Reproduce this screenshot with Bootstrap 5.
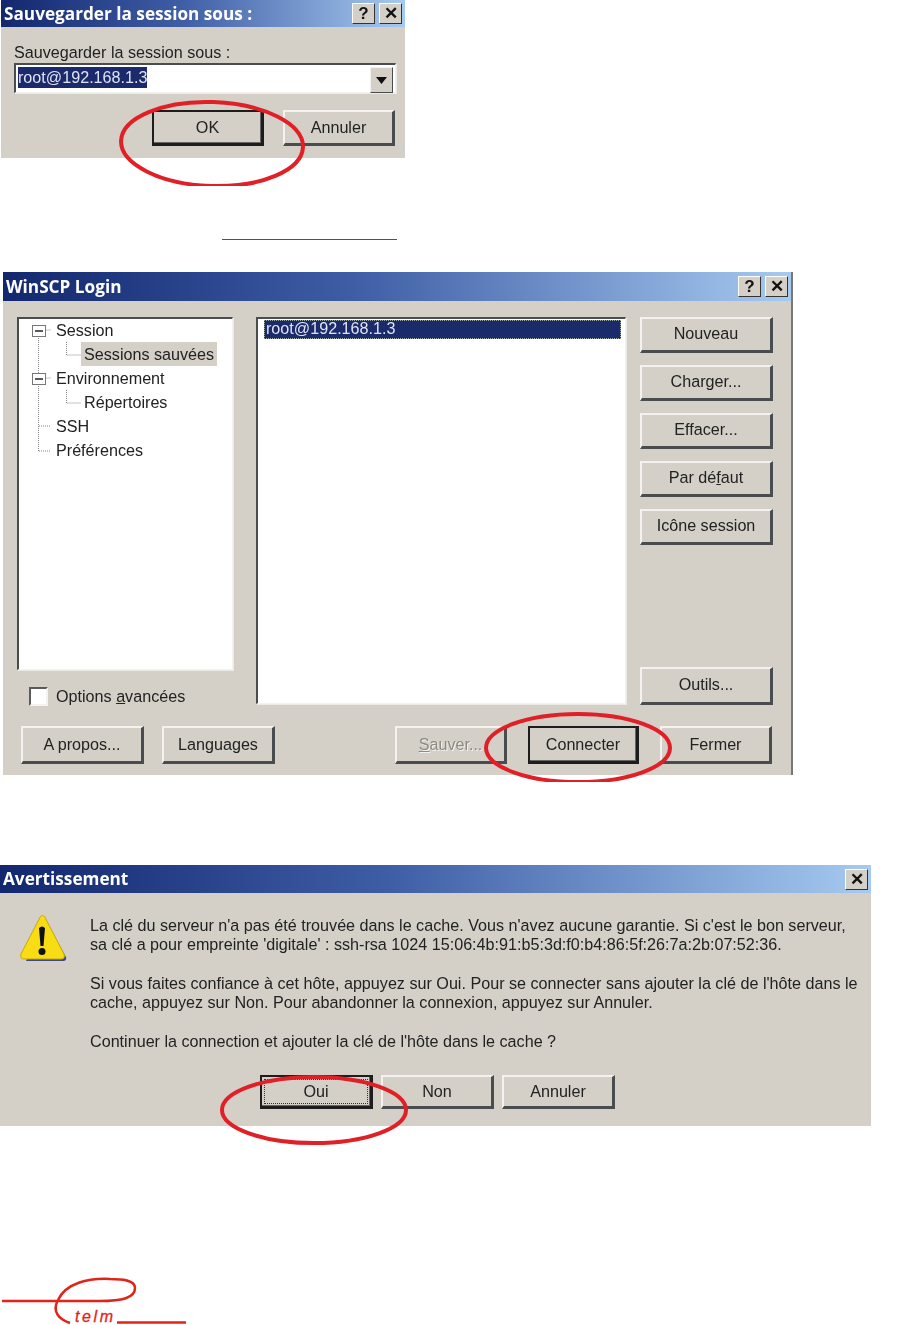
<!DOCTYPE html>
<html lang="fr">
<head>
<meta charset="UTF-8">
<title>WinSCP</title>
<link href="https://cdn.jsdelivr.net/npm/bootstrap@5.3.3/dist/css/bootstrap.min.css" rel="stylesheet">
<style>
body { position: relative; width: 909px; height: 1325px; overflow: hidden; background: #fff; color: #222; font-family: "Liberation Sans", Arial, sans-serif; font-size: 16.15px; line-height: 19px; }
.xp-win { background: #d4d0c8; border: 0; border-radius: 0; color: #222; --bs-card-bg: #d4d0c8; filter: blur(0.4px); }
.win-a { width: 404px; height: 158px; margin-left: 1px; }
.win-b { width: 790px; height: 503px; margin-left: 3px; border-right: 2px solid #777; }
.win-c { width: 871px; height: 261px; }
.link-rule { width: 175px; height: 1px; margin: 81px 0 32px 222px; background: #3a4fa0; }
.win-gap { height: 90px; }
.xp-title { background: linear-gradient(90deg, #12276e 0%, #3f5ea6 45%, #a6caf0 100%); color: #fff; font-family: "Open Sans", sans-serif; font-weight: 700; font-size: 17.2px; line-height: 20px; padding: 0 3px; border: 0; border-radius: 0 !important; }
.win-a .xp-title { height: 27px; }
.win-b .xp-title { height: 29px; }
.win-c .xp-title { height: 28px; }
.cap-btn { width: 23px; height: 21px; background: #d4d0c8; color: #111; border: 1px solid; border-color: #fff #333 #333 #fff; font-family: "Liberation Sans", sans-serif; font-weight: 700; font-size: 17px; line-height: 19px; text-align: center; }
.xp-btn { --bs-btn-padding-x: 0; --bs-btn-padding-y: 0; --bs-btn-border-radius: 0; --bs-btn-font-size: 16.15px; --bs-btn-line-height: 19px; --bs-btn-color: #222; --bs-btn-bg: #d4d0c8; --bs-btn-disabled-opacity: 1; background: #d4d0c8; color: #222; font-family: "Liberation Sans", sans-serif; border-style: solid; border-width: 2px 3px 3px 2px; border-color: #f4f2ee #4a4d50 #4a4d50 #f4f2ee; flex-shrink: 0; }
.xp-btn.is-default { border: 2px solid #1d1d1d; border-bottom-width: 3px; border-right-width: 3px; box-shadow: inset -1px -1px 0 #666; }
.xp-btn.is-off { color: #8c8a84; text-shadow: 1px 1px 0 #f4f2ee; }
.w-112 { width: 112px; }
.w-113 { width: 113px; }
.focus-dots { display: block; margin: 2px; height: calc(100% - 4px); border: 1px dotted #333; line-height: 22px; }
.sunken { background: #fff; border-style: solid; border-width: 2px 1px 1px 2px; border-color: #4a4d50 #f4f2ee #f4f2ee #4a4d50; box-shadow: 1px 1px 0 #eceae5; }
/* window 1 */
.a-body { padding: 16px 9px 0 13px; }
.a-combo { height: 30px; padding: 2px 2px 0 2px; margin-top: 1px; }
.sel-text { background: #1b2a6b; color: #dfe3f2; display: inline-block; height: 21px; line-height: 21px; }
.combo-drop { width: 23px; height: 26px; background: #d4d0c8; border: 1px solid; border-color: #f4f2ee #4a4d50 #4a4d50 #f4f2ee; display: flex; align-items: center; justify-content: center; }
.a-btns { margin-top: 17px; padding-left: 138px; gap: 19px; height: 36px; }
/* window 2 */
.b-body { padding: 16px 0 0 14px; }
.b-left { width: 216px; }
.b-tree { height: 353px; padding: 0; }
.tree-row { height: 24px; line-height: 24px; display: flex; align-items: center; white-space: nowrap; position: relative; top: -1px; }
.tree-ico { width: 37px; flex: none; }
.tree-sub { width: 65px; flex: none; }
.tree-svg { display: block; overflow: visible; }
.tree-hi { background: #d4d0c8; padding: 0 3px; margin-left: -3px; }
.b-list { width: 370px; height: 387px; margin-left: 23px; padding: 1px 4px 1px 6px; }
.list-sel { background: #1b2a6b; color: #dfe3f2; height: 19px; line-height: 15px; padding-left: 1px; border: 1px dotted #9aa; }
.b-side { width: 133px; margin-left: 14px; height: 388px; gap: 12px; }
.b-side .btn { width: 133px; height: 36px; padding-bottom: 2px; }
.b-side .btn-tools { height: 38px; }
.b-check { margin: 16px 0 0 12px; height: 20px; }
.chk-box { width: 19px; height: 19px; background: #fff; border: 2px solid; border-color: #5a5a5a #f4f2ee #f4f2ee #5a5a5a; margin-right: 8px; }
.b-foot { height: 38px; margin: 20px 18px 0 18px; }
.foot-about { width: 123px; }
.foot-lang { width: 113px; margin-left: 18px; }
.foot-save { margin-left: 120px; }
.foot-conn { width: 111px; margin-left: 21px; }
.foot-close { margin-left: 21px; }
/* window 3 */
.c-body { padding: 22px 0 0 20px; }
.c-text { margin: 1px 0 0 23px; width: 780px; white-space: nowrap; }
.c-text p { margin: 0 0 20px 0; }
.c-btns { gap: 8px; margin: 4px 0 0 240px; height: 34px; }
.logo-box { position: relative; height: 60px; margin-top: 139px; }
.logo-word { position: absolute; left: 75px; top: 44px; color: #e2231a; font-family: "Liberation Sans", sans-serif; font-style: italic; font-size: 16px; line-height: 15px; letter-spacing: 2.6px; -webkit-text-stroke: 0.3px #e2231a; }
.marks { position: absolute; left: 0; top: 0; pointer-events: none; }
.u-key { text-decoration: underline; }
</style>
</head>
<body>

<div class="card xp-win win-a">
  <div class="card-header xp-title d-flex align-items-center justify-content-between">
    <span>Sauvegarder la session sous :</span>
    <span class="d-flex gap-1"><span class="cap-btn">?</span><span class="cap-btn">✕</span></span>
  </div>
  <div class="a-body">
    <div>Sauvegarder la session sous :</div>
    <div class="sunken a-combo d-flex justify-content-between">
      <span class="sel-text">root@192.168.1.3</span>
      <span class="combo-drop"><svg width="11" height="7"><path d="M0 0h11L5.500 7z" fill="#111"/></svg></span>
    </div>
    <div class="d-flex a-btns">
      <button class="btn xp-btn is-default w-112">OK</button>
      <button class="btn xp-btn w-112">Annuler</button>
    </div>
  </div>
</div>

<div class="link-rule"></div>

<div class="card xp-win win-b">
  <div class="card-header xp-title d-flex align-items-center justify-content-between">
    <span>WinSCP Login</span>
    <span class="d-flex gap-1"><span class="cap-btn">?</span><span class="cap-btn">✕</span></span>
  </div>
  <div class="b-body d-flex">
    <div class="b-left">
      <div class="sunken b-tree">
        <div class="tree-row"><span class="tree-ico"><svg width="37" height="24" class="tree-svg"><path d="M20.500 12h11M19.500 18v115" fill="none" stroke="#888" stroke-dasharray="1 1"/><rect x="13.500" y="7.500" width="13" height="11" fill="#fff" stroke="#777"/><path d="M16 13h8" stroke="#222" stroke-width="1.500"/></svg></span>Session</div>
        <div class="tree-row"><span class="tree-sub"><svg width="65" height="24" class="tree-svg"><path d="M47.500 0v13h14" fill="none" stroke="#888" stroke-dasharray="1 1"/></svg></span><span class="tree-hi">Sessions sauvées</span></div>
        <div class="tree-row"><span class="tree-ico"><svg width="37" height="24" class="tree-svg"><path d="M20.500 12h11" fill="none" stroke="#888" stroke-dasharray="1 1"/><rect x="13.500" y="7.500" width="13" height="11" fill="#fff" stroke="#777"/><path d="M16 13h8" stroke="#222" stroke-width="1.500"/></svg></span>Environnement</div>
        <div class="tree-row"><span class="tree-sub"><svg width="65" height="24" class="tree-svg"><path d="M47.500 0v13h14" fill="none" stroke="#888" stroke-dasharray="1 1"/></svg></span>Répertoires</div>
        <div class="tree-row"><span class="tree-ico"><svg width="37" height="24" class="tree-svg"><path d="M20 12h12" fill="none" stroke="#888" stroke-dasharray="1 1"/></svg></span>SSH</div>
        <div class="tree-row"><span class="tree-ico"><svg width="37" height="24" class="tree-svg"><path d="M20 13h12" fill="none" stroke="#888" stroke-dasharray="1 1"/></svg></span>Préférences</div>
      </div>
      <div class="b-check d-flex align-items-center"><span class="chk-box"></span><span>Options <span class="u-key">a</span>vancées</span></div>
    </div>
    <div class="sunken b-list"><div class="list-sel">root@192.168.1.3</div></div>
    <div class="b-side d-flex flex-column">
      <button class="btn xp-btn">Nouveau</button>
      <button class="btn xp-btn">Charger...</button>
      <button class="btn xp-btn">Effacer...</button>
      <button class="btn xp-btn">Par dé<span class="u-key">f</span>aut</button>
      <button class="btn xp-btn">Icône session</button>
      <button class="btn xp-btn btn-tools mt-auto">Outils...</button>
    </div>
  </div>
  <div class="b-foot d-flex">
    <button class="btn xp-btn foot-about">A propos...</button>
    <button class="btn xp-btn foot-lang">Languages</button>
    <button class="btn xp-btn is-off w-112 foot-save"><span class="u-key">S</span>auver...</button>
    <button class="btn xp-btn is-default foot-conn">Connecter</button>
    <button class="btn xp-btn w-112 foot-close">Fermer</button>
  </div>
</div>

<div class="win-gap"></div>

<div class="card xp-win win-c">
  <div class="card-header xp-title d-flex align-items-center justify-content-between">
    <span>Avertissement</span>
    <span class="cap-btn">✕</span>
  </div>
  <div class="c-body">
    <div class="d-flex">
      <svg width="47" height="48" viewBox="0 0 47 48" class="flex-shrink-0">
        <path d="M24 2 46 42q1 4-3 4H6z" fill="#3b4a86"/>
        <path d="M20.500 1.500q2-2 4 0L44 39q1.500 5-3 5H4q-4.500 0-3-5z" fill="#f8dc14" stroke="#c9a908"/>
        <path d="M19 13q3-3 6 0l-1.500 18h-3z" fill="#111"/><circle cx="22" cy="36.500" r="3.500" fill="#111"/>
      </svg>
      <div class="c-text">
        <p>La clé du serveur n'a pas été trouvée dans le cache. Vous n'avez aucune garantie. Si c'est le bon serveur,<br>sa clé a pour empreinte 'digitale' : ssh-rsa 1024 15:06:4b:91:b5:3d:f0:b4:86:5f:26:7a:2b:07:52:36.</p>
        <p>Si vous faites confiance à cet hôte, appuyez sur Oui. Pour se connecter sans ajouter la clé de l'hôte dans le<br>cache, appuyez sur Non. Pour abandonner la connexion, appuyez sur Annuler.</p>
        <p>Continuer la connection et ajouter la clé de l'hôte dans le cache ?</p>
      </div>
    </div>
    <div class="d-flex c-btns">
      <button class="btn xp-btn is-default w-113"><span class="focus-dots">Oui</span></button>
      <button class="btn xp-btn w-113">Non</button>
      <button class="btn xp-btn w-113">Annuler</button>
    </div>
  </div>
</div>

<div class="logo-box">
  <svg width="190" height="60" class="d-block">
    <path d="M2 36H100C122 36 135 33 135 23C135 15 122 14 110 14C88 13 66 18 58 35C52 46 58 54 70 58M117 57.500H186" fill="none" stroke="#e2231a" stroke-width="2.500"/>
  </svg>
  <span class="logo-word">telm</span>
</div>

<svg class="marks" width="909" height="1325">
  <defs>
    <clipPath id="c1"><rect x="100" y="90" width="220" height="96"/></clipPath>
    <clipPath id="c2"><rect x="470" y="700" width="220" height="82"/></clipPath>
    <clipPath id="c3"><rect x="210" y="1060" width="210" height="85"/></clipPath>
  </defs>
  <g fill="none" stroke="#e01f26" stroke-width="4">
    <g clip-path="url(#c1)"><ellipse cx="212" cy="144" rx="91" ry="42" transform="rotate(2 212 144)"/></g>
    <g clip-path="url(#c2)"><ellipse cx="578" cy="748" rx="92" ry="34"/></g>
    <g clip-path="url(#c3)"><ellipse cx="314" cy="1110" rx="92" ry="33"/></g>
  </g>
</svg>

</body>
</html>
